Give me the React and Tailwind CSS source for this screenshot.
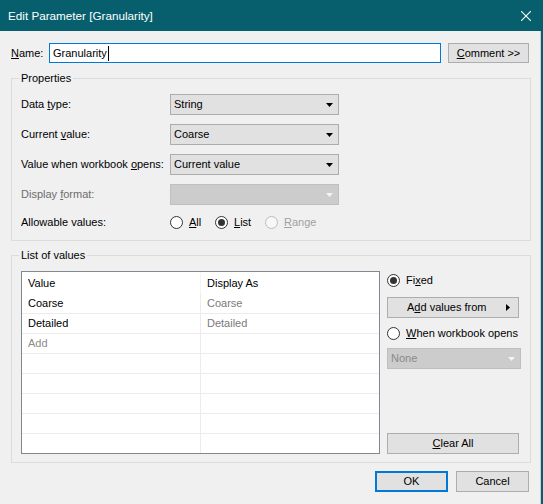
import React from 'react'

const U = ({ children }) => <span className="underline underline-offset-[1px] decoration-[1px]">{children}</span>

function Arrow({ color = '#000' }) {
  return (
    <svg width="7" height="4" viewBox="0 0 7 4" className="block">
      <path d="M0 0h7L3.5 4z" fill={color} />
    </svg>
  )
}

function Select({ value, disabled, className = 'w-[169px]' }) {
  return (
    <div
      className={`${className} h-[21px] flex items-center justify-between pl-[3px] pr-[5px] border ${
        disabled ? 'bg-[#cccccc] border-[#bfbfbf] text-[#8a8a8a]' : 'bg-[#e1e1e1] border-[#adadad]'
      }`}
    >
      <span>{value}</span>
      <Arrow color={disabled ? '#f4f4f4' : '#000'} />
    </div>
  )
}

function Radio({ checked, disabled }) {
  return (
    <span
      className={`w-[13px] h-[13px] rounded-full border flex items-center justify-center shrink-0 ${
        disabled ? 'border-[#bcbcbc] bg-[#f7f7f7]' : 'border-[#333333] bg-white'
      }`}
    >
      {checked && <span className="w-[7px] h-[7px] rounded-full bg-[#333333]" />}
    </span>
  )
}

function Group({ title, children, className = '' }) {
  return (
    <fieldset className={`ml-[11px] w-[520px] border border-[#dcdcdc] ${className}`}>
      <legend className="ml-[7px] px-[2px] leading-[14px]">{title}</legend>
      {children}
    </fieldset>
  )
}

function PropRow({ label, disabled, children }) {
  return (
    <div className="flex items-center h-[21px]">
      <span className={`w-[149px] ${disabled ? 'text-[#6d6d6d]' : ''}`}>{label}</span>
      {children}
    </div>
  )
}

const rows = [
  { value: 'Coarse', display: 'Coarse' },
  { value: 'Detailed', display: 'Detailed' },
  { value: 'Add', display: '', add: true },
  {}, {}, {}, {}, {},
]

function ValuesTable() {
  return (
    <div className="w-[359px] h-[183px] border border-[#828790] bg-white flex flex-col shrink-0">
      <div className="h-[22px] flex items-center shrink-0">
        <div className="w-[179px] h-full flex items-center pl-[6px] border-r border-[#f4f4f4]">Value</div>
        <div className="flex-1 pl-[6px]">Display As</div>
      </div>
      {rows.map((r, i) => (
        <div
          key={i}
          className={`flex shrink-0 ${i === rows.length - 1 ? 'h-[19px]' : 'h-[20px] border-b border-[#ececec]'}`}
        >
          <div className={`w-[179px] flex items-center pl-[6px] border-r border-[#ececec] ${r.add ? 'text-[#8c8c8c]' : ''}`}>
            {r.value}
          </div>
          <div className="flex-1 flex items-center pl-[6px] text-[#7a7a7a]">{r.display}</div>
        </div>
      ))}
    </div>
  )
}

export default function App() {
  return (
    <div className="w-[543px] h-[504px] overflow-hidden bg-[#075f6e] font-['Liberation_Sans',Arial,sans-serif] text-[11px] text-black">
      {/* title bar */}
      <div className="h-[31px] flex items-center pl-[8px] pr-[12px] text-white text-[11.7px]">
        <span className="flex-1">Edit Parameter [Granularity]</span>
        <svg width="10" height="10" viewBox="0 0 10 10" className="block">
          <path d="M0 0L10 10M10 0L0 10" stroke="#fff" strokeWidth="1.1" />
        </svg>
      </div>

      <div className="w-[541px] h-[473px] bg-[#f0f0f0] border-r border-[#cfcfcf] flex flex-col">
        {/* name */}
        <div className="flex items-center pl-[11px] mt-[12px] h-[20px]">
          <span className="w-[38px]"><U>N</U>ame:</span>
          <div className="w-[392px] h-[20px] border border-[#0078d7] bg-white flex items-center pl-[3px]">
            <span>Granularity</span>
            <span className="w-[1px] h-[15px] bg-black ml-[1px]" />
          </div>
          <button className="ml-[7px] w-[81px] h-[20px] border border-[#adadad] bg-[#e1e1e1] flex items-center justify-center">
            <span><U>C</U>omment &gt;&gt;</span>
          </button>
        </div>

        {/* properties */}
        <Group title="Properties" className="mt-[8px]">
          <div className="pl-[9px] pt-[9px] pb-[7px] flex flex-col gap-[9px]">
            <PropRow label={<>Data <U>t</U>ype:</>}>
              <Select value="String" />
            </PropRow>
            <PropRow label={<>Current <U>v</U>alue:</>}>
              <Select value="Coarse" />
            </PropRow>
            <PropRow label={<>Value when workbook <U>o</U>pens:</>}>
              <Select value="Current value" />
            </PropRow>
            <PropRow label={<>Display <U>f</U>ormat:</>} disabled>
              <Select value="" disabled />
            </PropRow>
            <div className="flex items-center h-[21px] -mt-[2px]">
              <span className="w-[149px]">Allowable values:</span>
              <div className="w-[45px] flex items-center gap-[6px]">
                <Radio />
                <span><U>A</U>ll</span>
              </div>
              <div className="w-[50px] flex items-center gap-[6px]">
                <Radio checked />
                <span><U>L</U>ist</span>
              </div>
              <div className="flex items-center gap-[6px] text-[#a0a0a0]">
                <Radio disabled />
                <span><U>R</U>ange</span>
              </div>
            </div>
          </div>
        </Group>

        {/* list of values */}
        <Group title="List of values" className="mt-[7px]">
          <div className="pl-[9px] pt-[9px] pb-[8px] flex">
            <ValuesTable />
            <div className="ml-[7px] w-[134px] flex flex-col">
              <div className="h-[20px] flex items-center gap-[6px] -mt-[1px]">
                <Radio checked />
                <span>Fi<U>x</U>ed</span>
              </div>
              <button className="mt-[7px] w-[132px] h-[21px] border border-[#adadad] bg-[#e1e1e1] flex items-center justify-between pl-[19px] pr-[8px]">
                <span>A<U>d</U>d values from</span>
                <svg width="4" height="7" viewBox="0 0 4 7" className="block">
                  <path d="M0 0L4 3.5L0 7z" fill="#000" />
                </svg>
              </button>
              <div className="mt-[5px] h-[20px] flex items-center gap-[6px]">
                <Radio />
                <span><U>W</U>hen workbook opens</span>
              </div>
              <div className="mt-[5px]">
                <Select value="None" disabled className="w-[134px]" />
              </div>
              <button className="mt-auto w-[132px] h-[21px] border border-[#adadad] bg-[#e1e1e1] flex items-center justify-center">
                <span><U>C</U>lear All</span>
              </button>
            </div>
          </div>
        </Group>

        {/* footer */}
        <div className="mt-[8px] flex justify-end gap-[8px] pr-[11px]">
          <button className="w-[73px] h-[21px] border-2 border-[#0078d7] bg-[#e1e1e1] flex items-center justify-center">
            OK
          </button>
          <button className="w-[73px] h-[21px] border border-[#adadad] bg-[#e1e1e1] flex items-center justify-center">
            Cancel
          </button>
        </div>
      </div>
    </div>
  )
}
